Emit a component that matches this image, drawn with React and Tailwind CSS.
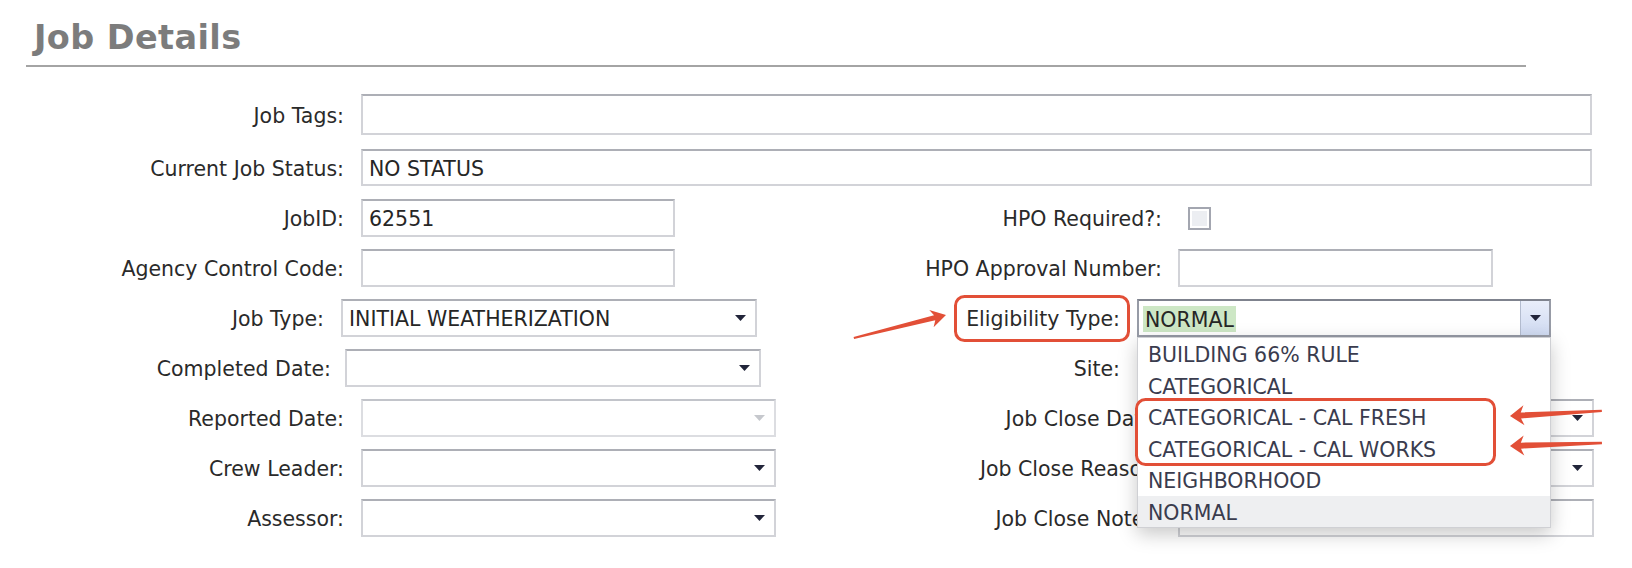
import React from 'react';

const box = 'h-full border-2 border-[#d2d3d8] border-t-[#adafb6] bg-white flex items-center shrink-0';
const lbl = 'text-right leading-none pt-[3px] shrink-0';
const val = 'leading-none pt-[3px] text-[#262626]';

function Caret({ color = '#22253a' }) {
  return (
    <svg width="11" height="6" viewBox="0 0 11 6" className="shrink-0">
      <path d="M0 0h11L5.5 6z" fill={color} />
    </svg>
  );
}

function Select({ className, value, disabled }) {
  return (
    <div className={`${box} ${className} justify-between pl-[6px] pr-[9px]`}>
      <span className={val}>{value}</span>
      <Caret color={disabled ? '#c6c8cd' : '#22253a'} />
    </div>
  );
}

const options = [
  'BUILDING 66% RULE',
  'CATEGORICAL',
  'CATEGORICAL - CAL FRESH',
  'CATEGORICAL - CAL WORKS',
  'NEIGHBORHOOD',
  'NORMAL',
];

// arrow drawn pointing left, tip at origin
function arrowPoints(len, hl = 14, hw = 10, sw = 3, tw = 1.2) {
  const n = hl * 0.78;
  return `0,0 ${hl},${-hw} ${n},${-sw} ${len},${-tw} ${len},${tw} ${n},${sw} ${hl},${hw}`;
}

export default function App() {
  return (
    <div className="relative w-[1632px] h-[568px] overflow-hidden bg-white font-['DejaVu_Sans',Verdana,sans-serif] text-[20.5px] text-[#2a2a2a]">
      <h1 className="ml-[34px] mt-[21px] h-[32px] text-[33.5px] leading-none font-bold tracking-[0.4px] text-[#7c7c7c]">
        Job Details
      </h1>
      <div className="ml-[26px] mt-[12px] w-[1500px] h-[2px] bg-[#a4a4a4]" />

      {/* full width rows */}
      <div className="mt-[27px] flex h-[41px] items-center">
        <div className={`${lbl} w-[344px]`}>Job Tags:</div>
        <div className={`${box} ml-[17px] w-[1231px]`} />
      </div>
      <div className="mt-[14px] flex h-[37px] items-center">
        <div className={`${lbl} w-[344px]`}>Current Job Status:</div>
        <div className={`${box} ml-[17px] w-[1231px] pl-[6px]`}>
          <span className={val}>NO STATUS</span>
        </div>
      </div>

      {/* two column rows */}
      <div className="mt-[13px] flex h-[38px] items-center">
        <div className="flex h-full w-[790px] shrink-0 items-center">
          <div className={`${lbl} w-[344px]`}>JobID:</div>
          <div className={`${box} ml-[17px] w-[314px] pl-[6px]`}>
            <span className={val}>62551</span>
          </div>
        </div>
        <div className={`${lbl} w-[372px]`}>HPO Required?:</div>
        <div className="ml-[26px] w-[23px] h-[23px] border-2 border-[#a3a6b0] bg-[#eceef2] shadow-[inset_0_0_0_2px_#fff]" />
      </div>

      <div className="mt-[12px] flex h-[38px] items-center">
        <div className="flex h-full w-[790px] shrink-0 items-center">
          <div className={`${lbl} w-[344px]`}>Agency Control Code:</div>
          <div className={`${box} ml-[17px] w-[314px]`} />
        </div>
        <div className={`${lbl} w-[372px]`}>HPO Approval Number:</div>
        <div className={`${box} ml-[16px] w-[315px]`} />
      </div>

      <div className="mt-[12px] flex h-[38px] items-center">
        <div className="flex h-full w-[790px] shrink-0 items-center">
          <div className={`${lbl} w-[324px]`}>Job Type:</div>
          <Select className="ml-[17px] w-[416px]" value="INITIAL WEATHERIZATION" />
        </div>
        <div className={`${lbl} w-[330px]`}>Eligibility Type:</div>
        <div className="relative z-10 ml-[17px] h-full w-[414px] shrink-0">
          <div className="flex h-full items-center border-2 border-[#979ba6] border-t-[#7f838e] bg-white">
            <div className="flex flex-1 items-center pl-[4px] pt-[2px]">
              <span className="bg-[#cde7c5] px-[2px] pb-[2px] pt-[4px] leading-none text-[#262626]">NORMAL</span>
            </div>
            <div className="flex h-full w-[29px] items-center justify-center border-l border-[#b3bccf] bg-gradient-to-b from-[#e9eefa] to-[#cfdaf1]">
              <Caret />
            </div>
          </div>
          <div className="absolute left-0 top-full w-full border border-[#cfd0d4] bg-white shadow-[0_6px_18px_rgba(0,0,0,0.22)]">
            {options.map((o, i) => (
              <div
                key={o}
                className={`flex h-[31.5px] items-center pl-[10px] pt-[3px] leading-none text-[#3a3c4e] ${i === options.length - 1 ? 'bg-[#eeeff1]' : ''}`}
              >
                {o}
              </div>
            ))}
          </div>
        </div>
      </div>

      <div className="mt-[12px] flex h-[38px] items-center">
        <div className="flex h-full w-[790px] shrink-0 items-center">
          <div className={`${lbl} w-[331px]`}>Completed Date:</div>
          <Select className="ml-[14px] w-[416px]" value="" />
        </div>
        <div className={`${lbl} w-[330px]`}>Site:</div>
        <Select className="ml-[17px] w-[414px]" value="" />
      </div>

      <div className="mt-[12px] flex h-[38px] items-center">
        <div className="flex h-full w-[790px] shrink-0 items-center">
          <div className={`${lbl} w-[344px]`}>Reported Date:</div>
          <Select className="ml-[17px] w-[415px] border-[#dcdde1] border-t-[#c2c4ca]" value="" disabled />
        </div>
        <div className={`${lbl} w-[372px]`}>Job Close Date:</div>
        <Select className="ml-[16px] w-[416px]" value="" />
      </div>

      <div className="mt-[12px] flex h-[38px] items-center">
        <div className="flex h-full w-[790px] shrink-0 items-center">
          <div className={`${lbl} w-[344px]`}>Crew Leader:</div>
          <Select className="ml-[17px] w-[415px]" value="" />
        </div>
        <div className={`${lbl} w-[372px]`}>Job Close Reason:</div>
        <Select className="ml-[16px] w-[416px]" value="" />
      </div>

      <div className="mt-[12px] flex h-[38px] items-center">
        <div className="flex h-full w-[790px] shrink-0 items-center">
          <div className={`${lbl} w-[344px]`}>Assessor:</div>
          <Select className="ml-[17px] w-[415px]" value="" />
        </div>
        <div className={`${lbl} w-[372px]`}>Job Close Notes:</div>
        <div className={`${box} ml-[16px] w-[416px]`} />
      </div>

      {/* annotations */}
      <svg className="pointer-events-none absolute left-0 top-0 z-20" width="1632" height="568" viewBox="0 0 1632 568">
        <rect x="955.5" y="296.5" width="173" height="44" rx="9" fill="none" stroke="#e24f37" strokeWidth="3" />
        <rect x="1136.5" y="399.5" width="358" height="65" rx="9" fill="none" stroke="#e24f37" strokeWidth="3" />
        <polygon points={arrowPoints(95, 15, 9, 2.6, 1)} fill="#e24f37" transform="translate(946 315) rotate(166)" />
        <polygon points={arrowPoints(92)} fill="#e24f37" transform="translate(1510 416) rotate(-3.2)" />
        <polygon points={arrowPoints(92)} fill="#e24f37" transform="translate(1510 446) rotate(-1.9)" />
      </svg>
    </div>
  );
}
